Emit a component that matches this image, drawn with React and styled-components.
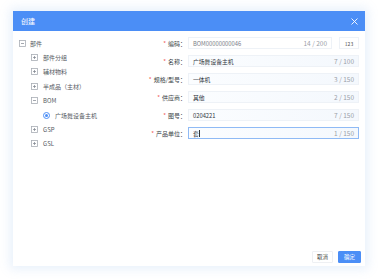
import React from 'react';
import styled, { createGlobalStyle } from 'styled-components';

const GlobalStyle = createGlobalStyle`
  html, body {
    margin: 0;
    padding: 0;
    background: #ffffff;
    font-family: "Noto Sans CJK SC", "Noto Sans", sans-serif;
  }
`;

const tree = [
  { label: '部件', level: 0, icon: 'minus' },
  { label: '部件分组', level: 1, icon: 'plus' },
  { label: '辅材物料', level: 1, icon: 'plus' },
  { label: '半成品（主材）', level: 1, icon: 'plus' },
  { label: 'BOM', level: 1, icon: 'minus' },
  { label: '广场舞设备主机', level: 2, icon: 'radio' },
  { label: 'GSP', level: 1, icon: 'plus' },
  { label: 'GSL', level: 1, icon: 'plus' },
];

const fields = [
  { label: '编码', value: 'BOM00000000046', count: '14 / 200', extra: '123', muted: true },
  { label: '名称', value: '广场舞设备主机', count: '7 / 100' },
  { label: '规格/型号', value: '一体机', count: '3 / 150' },
  { label: '供应商', value: '其他', count: '2 / 150' },
  { label: '图号', value: '0204221', count: '7 / 150' },
  { label: '产品单位', value: '套', count: '1 / 150', focused: true },
];

function TreeIcon({ type }) {
  if (type === 'radio') {
    return (
      <Radio>
        <RadioDot />
      </Radio>
    );
  }
  return (
    <svg width="7" height="7" viewBox="0 0 7 7">
      <rect x="0.5" y="0.5" width="6" height="6" fill="#fff" stroke="#a8adb5" strokeWidth="0.8" />
      <line x1="2" y1="3.5" x2="5" y2="3.5" stroke="#7d838c" strokeWidth="0.7" />
      {type === 'plus' && <line x1="3.5" y1="2" x2="3.5" y2="5" stroke="#7d838c" strokeWidth="0.7" />}
    </svg>
  );
}

export default function App() {
  return (
    <>
      <GlobalStyle />
      <Page>
        <Dialog>
          <Header>
            <Title>创建</Title>
            <svg width="7" height="7" viewBox="0 0 7 7">
              <path d="M0.5 0.5 L6.5 6.5 M6.5 0.5 L0.5 6.5" stroke="#fff" strokeWidth="0.9" />
            </svg>
          </Header>
          <Body>
            <Tree>
              {tree.map((node) => (
                <TreeRow key={node.label} $level={node.level}>
                  <TreeIcon type={node.icon} />
                  <TreeLabel>{node.label}</TreeLabel>
                </TreeRow>
              ))}
            </Tree>
            <Form>
              {fields.map((f) => (
                <FormRow key={f.label}>
                  <Label>
                    <Star>*</Star>
                    {f.label}：
                  </Label>
                  <Input $focused={f.focused} $muted={f.muted}>
                    <Value $muted={f.muted}>
                      {f.value}
                      {f.focused && <Caret />}
                    </Value>
                    <Count>{f.count}</Count>
                  </Input>
                  {f.extra && <SmallButton>{f.extra}</SmallButton>}
                </FormRow>
              ))}
            </Form>
          </Body>
          <Footer>
            <Button>取消</Button>
            <Button $primary>确定</Button>
          </Footer>
        </Dialog>
      </Page>
    </>
  );
}

const Page = styled.div`
  width: 378px;
  height: 279px;
  padding: 11px 0 0 13px;
  box-sizing: border-box;
  overflow: hidden;
`;

const Dialog = styled.div`
  width: 352px;
  height: 255px;
  background: #fff;
  display: flex;
  flex-direction: column;
  box-shadow: 0 0 10px 3px rgba(120, 170, 235, 0.18);
`;

const Header = styled.div`
  height: 20px;
  background: #4b8ef6;
  display: flex;
  align-items: center;
  justify-content: space-between;
  padding: 0 7px 0 8px;
`;

const Title = styled.span`
  color: #fff;
  font-size: 7px;
  line-height: 1;
`;

const Body = styled.div`
  flex: 1;
  display: flex;
`;

const Tree = styled.div`
  width: 112px;
  flex-shrink: 0;
  padding: 5px 0 0 6px;
  box-sizing: border-box;
`;

const TreeRow = styled.div`
  height: 14.4px;
  display: flex;
  align-items: center;
  gap: ${(p) => (p.$level === 0 ? 4 : 5)}px;
  padding-left: ${(p) => p.$level * 12}px;
`;

const TreeLabel = styled.span`
  font-size: 6px;
  color: #555a62;
  white-space: nowrap;
`;

const Radio = styled.span`
  width: 5px;
  height: 5px;
  border-radius: 50%;
  border: 0.8px solid #4b8ef6;
  display: flex;
  align-items: center;
  justify-content: center;
`;

const RadioDot = styled.span`
  width: 3px;
  height: 3px;
  border-radius: 50%;
  background: #4b8ef6;
`;

const Form = styled.div`
  flex: 1;
  min-width: 0;
  padding: 6px 6px 0 0;
  display: flex;
  flex-direction: column;
  gap: 6px;
`;

const FormRow = styled.div`
  display: flex;
  align-items: center;
  height: 12px;
`;

const Label = styled.div`
  width: 61px;
  flex-shrink: 0;
  text-align: right;
  font-size: 6px;
  color: #3a3f46;
  white-space: nowrap;
`;

const Star = styled.span`
  color: #f05a5a;
  margin-right: 2px;
`;

const Input = styled.div`
  flex: 1;
  min-width: 0;
  height: 12px;
  box-sizing: border-box;
  margin-left: 2px;
  display: flex;
  align-items: center;
  justify-content: space-between;
  padding: 0 4px;
  border: 0.6px solid ${(p) => (p.$focused ? '#8fbaf5' : '#eef2f7')};
  background: ${(p) => (p.$muted ? '#fff' : 'linear-gradient(90deg, #fbfdff, #f4f8fd)')};
`;

const Value = styled.span`
  font-size: 5.8px;
  color: ${(p) => (p.$muted ? '#7b8088' : '#2f343b')};
  display: flex;
  align-items: center;
  white-space: nowrap;
`;

const Caret = styled.span`
  width: 0.6px;
  height: 7px;
  background: #333;
  margin-left: 0.5px;
`;

const Count = styled.span`
  font-size: 6.5px;
  color: #9aa0a8;
  white-space: nowrap;
`;

const SmallButton = styled.div`
  width: 20px;
  height: 12px;
  flex-shrink: 0;
  margin-left: 7px;
  box-sizing: border-box;
  border: 0.6px solid #eef2f7;
  font-size: 5px;
  color: #555;
  display: flex;
  align-items: center;
  justify-content: center;
`;

const Footer = styled.div`
  display: flex;
  justify-content: flex-end;
  gap: 5px;
  padding: 0 4px 3px 0;
`;

const Button = styled.div`
  height: 10px;
  padding: 0 ${(p) => (p.$primary ? 5 : 4)}px;
  font-size: 5.5px;
  display: flex;
  align-items: center;
  border-radius: 1px;
  border: 0.6px solid ${(p) => (p.$primary ? '#4b8ef6' : '#eef0f3')};
  background: ${(p) => (p.$primary ? '#4b8ef6' : '#fff')};
  color: ${(p) => (p.$primary ? '#fff' : '#444')};
`;
